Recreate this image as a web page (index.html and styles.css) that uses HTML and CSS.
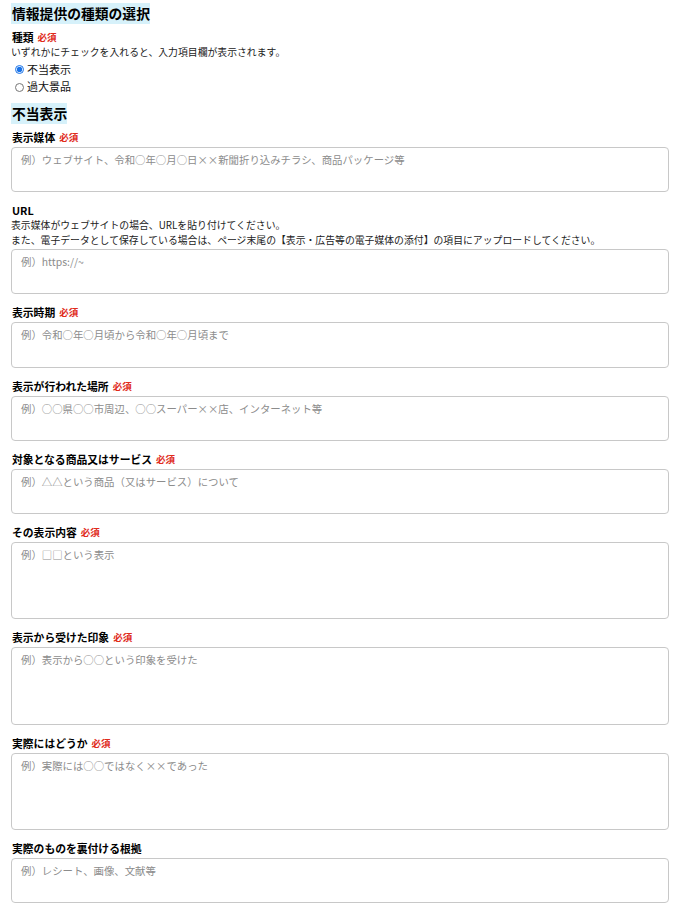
FILE: index.html
```html
<!DOCTYPE html>
<html lang="ja">
<head>
<meta charset="utf-8">
<title>情報提供フォーム</title>
<link rel="stylesheet" href="styles.css">
</head>
<body>
<div class="page">
  <h2 class="sec">情報提供の種類の選択</h2>
  <div class="field after-sec">
    <div class="label">種類<span class="req">必須</span></div>
    <p class="desc">いずれかにチェックを入れると、入力項目欄が表示されます。</p>
    <ul class="radios">
      <li><label><input type="radio" name="kind" checked>不当表示</label></li>
      <li><label><input type="radio" name="kind">過大景品</label></li>
    </ul>
  </div>

  <h2 class="sec sec2">不当表示</h2>

  <div class="field after-sec">
    <div class="label">表示媒体<span class="req">必須</span></div>
    <textarea placeholder="例）ウェブサイト、令和○年○月○日××新聞折り込みチラシ、商品パッケージ等"></textarea>
  </div>

  <div class="field">
    <div class="label">URL</div>
    <p class="desc">表示媒体がウェブサイトの場合、URLを貼り付けてください。<br>また、電子データとして保存している場合は、ページ末尾の【表示・広告等の電子媒体の添付】の項目にアップロードしてください。</p>
    <textarea placeholder="例）https://~"></textarea>
  </div>

  <div class="field">
    <div class="label">表示時期<span class="req">必須</span></div>
    <textarea placeholder="例）令和○年○月頃から令和○年○月頃まで"></textarea>
  </div>

  <div class="field">
    <div class="label">表示が行われた場所<span class="req">必須</span></div>
    <textarea placeholder="例）○○県○○市周辺、○○スーパー××店、インターネット等"></textarea>
  </div>

  <div class="field">
    <div class="label">対象となる商品又はサービス<span class="req">必須</span></div>
    <textarea placeholder="例）△△という商品（又はサービス）について"></textarea>
  </div>

  <div class="field">
    <div class="label">その表示内容<span class="req">必須</span></div>
    <textarea class="tall" placeholder="例）□□という表示"></textarea>
  </div>

  <div class="field">
    <div class="label">表示から受けた印象<span class="req">必須</span></div>
    <textarea class="tall" placeholder="例）表示から○○という印象を受けた"></textarea>
  </div>

  <div class="field">
    <div class="label">実際にはどうか<span class="req">必須</span></div>
    <textarea class="tall" placeholder="例）実際には○○ではなく××であった"></textarea>
  </div>

  <div class="field">
    <div class="label">実際のものを裏付ける根拠</div>
    <textarea placeholder="例）レシート、画像、文献等"></textarea>
  </div>
</div>
</body>
</html>
```

FILE: styles.css
```css
html, body {
  margin: 0;
  background: #fff;
}

body {
  font-family: "Noto Sans CJK JP", "Noto Sans", sans-serif;
  color: #111;
}

.page {
  padding: 3px 12px 0 11px;
}

.sec {
  margin: 0;
  width: fit-content;
  background: #d6f1fa;
  font-size: 13.8px;
  line-height: 21px;
  height: 21px;
  font-weight: 700;
  padding: 0 0 0 1px;
  color: #000;
}

.sec2 {
  margin-top: 7.25px;
}

.field {
  margin-top: 10px;
}

.field.after-sec {
  margin-top: 4.75px;
}

.label {
  height: 16px;
  font-size: 10.8px;
  font-weight: 700;
  line-height: 16px;
  padding-left: 1px;
  color: #000;
}

.req {
  color: #e02b1b;
  font-size: 9.5px;
  line-height: 1;
  margin-left: 4px;
  vertical-align: 1px;
}

.desc {
  margin: 0;
  font-size: 9.85px;
  line-height: 14.5px;
  color: #222;
}

.radios {
  list-style: none;
  margin: 1.5px 0 0;
  padding: 0;
}

.radios li {
  height: 17.5px;
  font-size: 11px;
  line-height: 17.5px;
  color: #111;
}

.radios label {
  display: flex;
  align-items: center;
  height: 17.5px;
}

.radios input {
  width: 9px;
  height: 9px;
  margin: 0 3px 0 4px;
  accent-color: #1a73e8;
}

textarea {
  display: block;
  box-sizing: border-box;
  width: 100%;
  height: 45.25px;
  margin: 2px 0 0;
  border: 1px solid #c8c8c8;
  border-radius: 4px;
  padding: 5px 9px;
  font-family: "Noto Sans CJK JP", "Noto Sans", sans-serif;
  font-size: 10.4px;
  line-height: 14px;
  resize: none;
  background: #fff;
}

textarea.tall {
  height: 77.33px;
}

textarea::placeholder {
  color: #8c8c8c;
}
```
